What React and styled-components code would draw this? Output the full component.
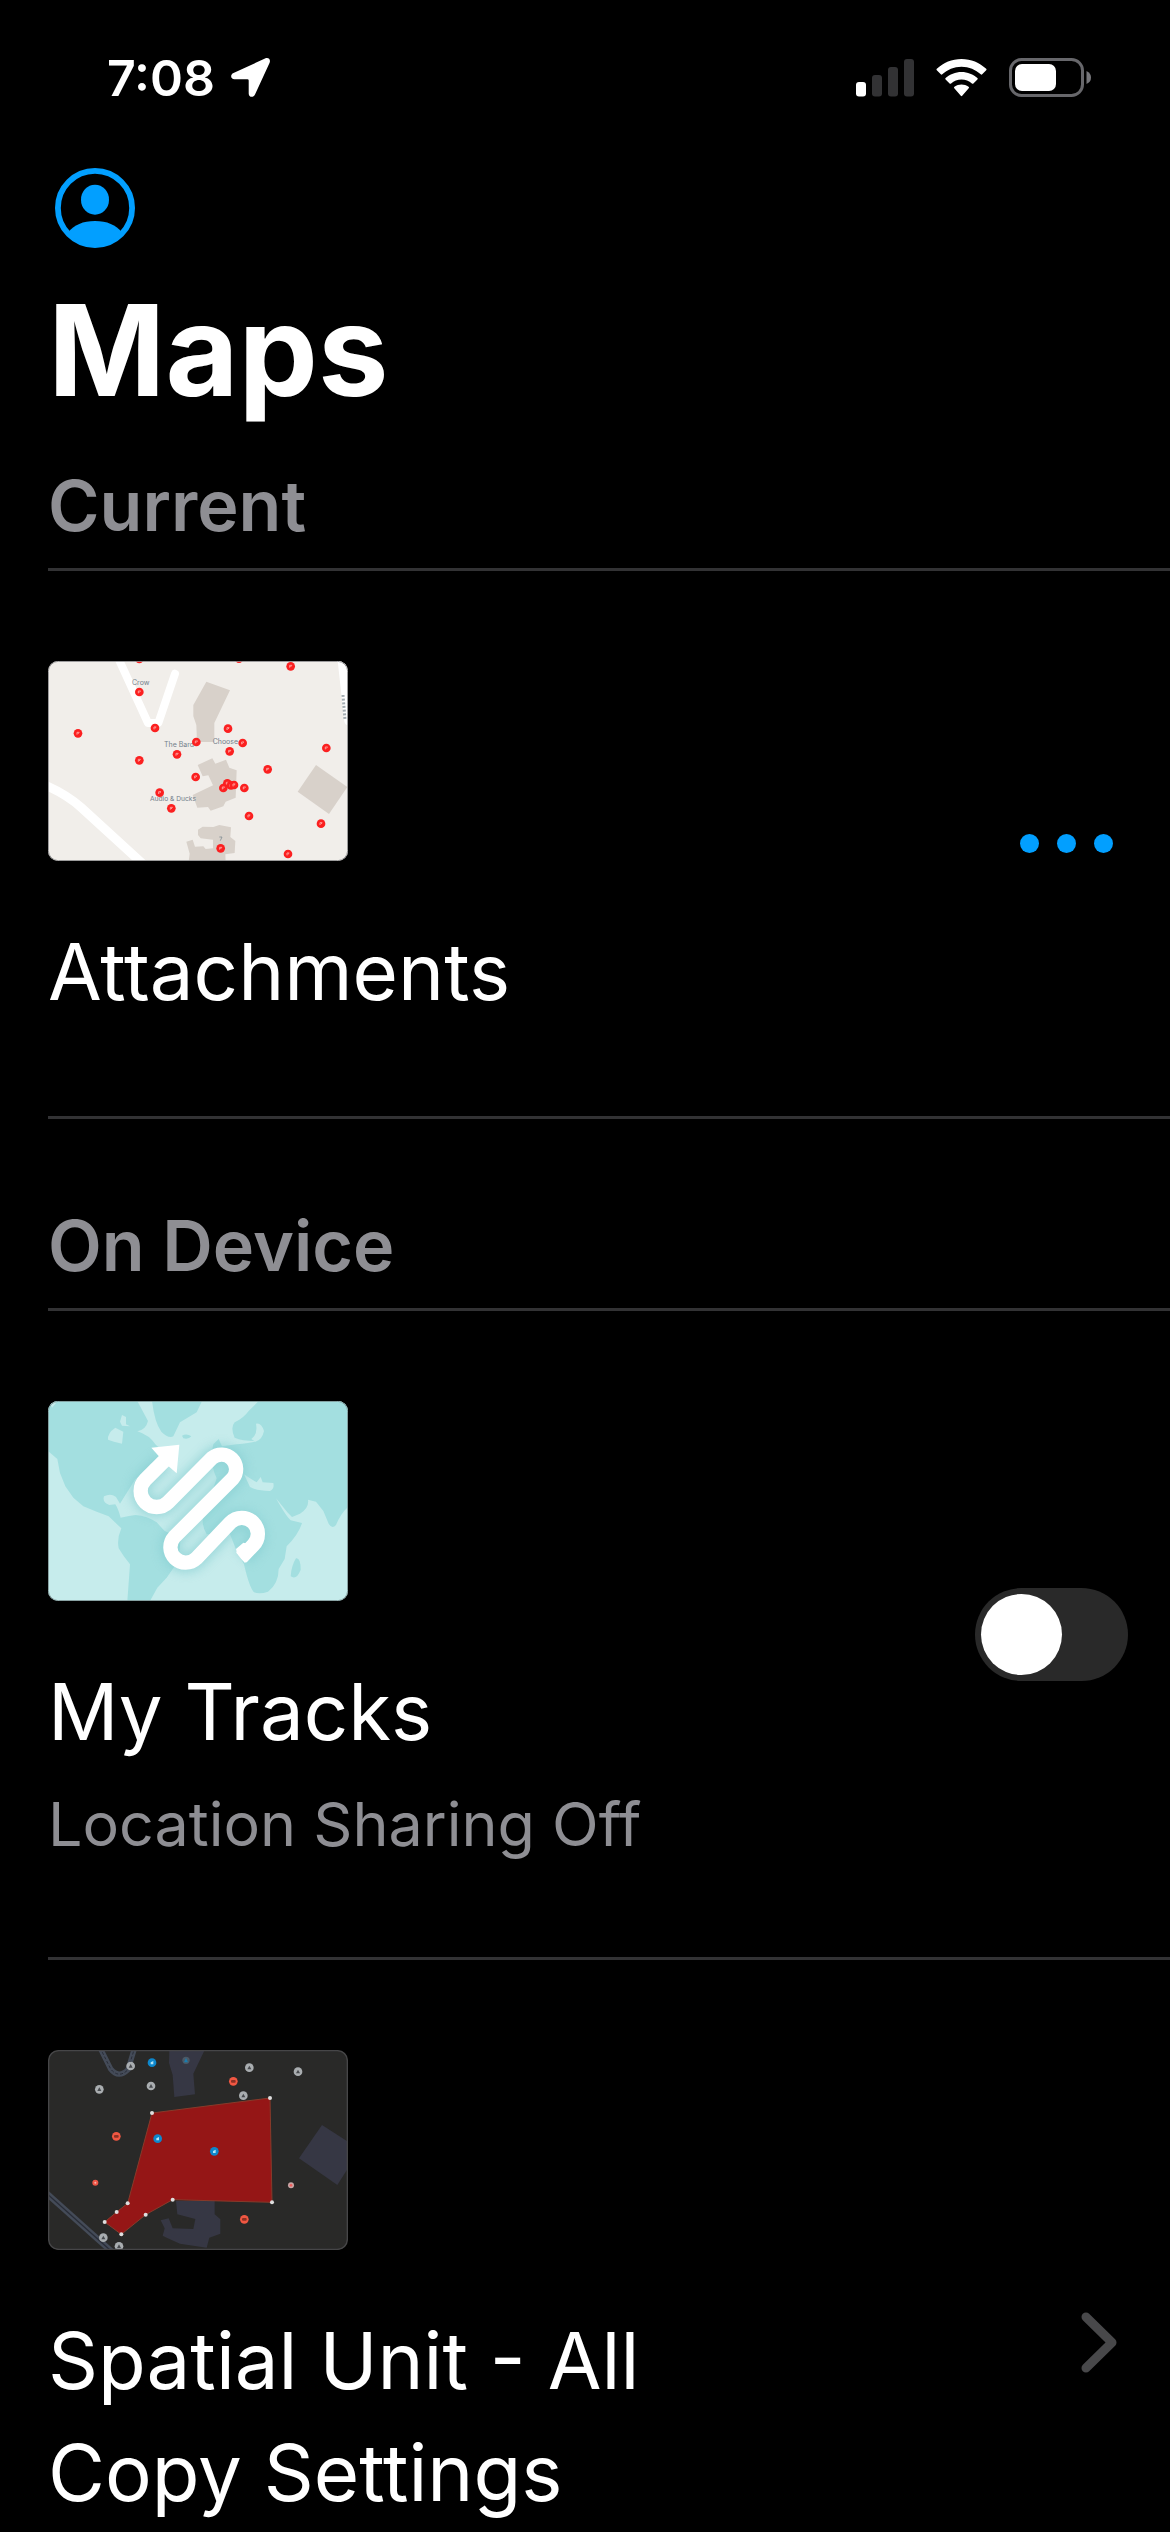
import React, { useState } from "react";
import styled, { createGlobalStyle } from "styled-components";

const BLUE = "#029fff";
const GREY = "#8e8e93";
const RULE = "#323234";

const GlobalStyle = createGlobalStyle`
  *, *::before, *::after { box-sizing: border-box; }
  body {
    margin: 0;
    background: #000;
    color: #fff;
    font-family: Inter, "Liberation Sans", sans-serif;
  }
`;

const Screen = styled.main`
  height: 100vh;
  overflow-y: auto;
  scrollbar-width: none;
`;

const StatusBar = styled.div`
  display: flex;
  align-items: center;
  justify-content: space-between;
  height: 155px;
  padding: 0 79px 0 107px;
`;

const StatusGroup = styled.div`
  display: flex;
  align-items: center;
  gap: ${(p) => p.$gap}px;
`;

const Time = styled.time`
  font-size: 50px;
  line-height: 60px;
  font-weight: 600;
`;

const Header = styled.header`
  display: flex;
  flex-direction: column;
  align-items: flex-start;
  gap: 26px;
  padding: 13px 48px 0;
`;

const ProfileButton = styled.button`
  display: block;
  margin: 0 0 0 7px;
  padding: 0;
  border: 0;
  background: none;
  color: ${BLUE};

  svg { display: block; }
`;

const PageTitle = styled.h1`
  margin: 0;
  font-size: 126px;
  line-height: 152px;
  font-weight: 700;
`;

const SectionTitle = styled.h2`
  margin: 0 0 0 48px;
  padding: ${(p) => p.$space}px 0 18px;
  border-bottom: 3px solid ${RULE};
  color: ${GREY};
  font-size: 70px;
  line-height: 88px;
  font-weight: 600;
`;

const Row = styled.article`
  display: flex;
  align-items: center;
  justify-content: space-between;
  margin-left: 48px;
  padding-right: 42px;
`;

const Divider = styled.hr`
  height: 3px;
  margin: 0 0 0 48px;
  border: 0;
  background: ${RULE};
`;

const RowBody = styled.div`
  display: flex;
  flex-direction: column;
  max-width: 700px;
  min-height: ${(p) => (p.$tall ? 764 : 0)}px;
  padding: 90px 0 88px;
`;

const Thumbnail = styled.svg`
  display: block;
  width: 300px;
  height: 200px;
  margin-bottom: 55px;
  border-radius: 10px;
`;

const RowTitle = styled.h3`
  margin: 0;
  font-size: 78px;
  line-height: 112px;
  font-weight: 400;
`;

const RowDetail = styled.p`
  margin: 11px 0 0;
  color: ${GREY};
  font-size: 61px;
  line-height: 90px;
`;

const MoreButton = styled.button`
  display: flex;
  gap: 18px;
  padding: 30px 15px;
  border: 0;
  background: none;
`;

const Dot = styled.span`
  width: 19px;
  height: 19px;
  border-radius: 50%;
  background: ${BLUE};
`;

const Switch = styled.input`
  display: flex;
  align-items: center;
  width: 153px;
  height: 93px;
  margin: 0;
  padding: 6px;
  border-radius: 47px;
  appearance: none;
  background: ${(p) => (p.checked ? "#30d158" : "#292929")};

  &::before {
    content: "";
    width: 81px;
    height: 81px;
    margin-left: ${(p) => (p.checked ? 60 : 0)}px;
    border-radius: 50%;
    background: #fff;
  }
`;

const OpenLink = styled.a`
  display: block;
  padding: 20px 11px;
  color: #48484a;

  svg { display: block; }
`;

const RED_PINS = [
  [298, 123], [345, 231], [114, 247], [469, 273], [411, 310], [298, 328],
  [564, 233], [608, 276], [569, 301], [683, 355], [467, 378], [562, 397],
  [573, 403], [582, 402], [550, 411], [613, 411], [359, 425], [394, 472],
  [627, 495], [843, 518], [744, 609], [542, 592], [859, 291], [752, 46],
  [298, 24], [597, 23],
];

function AttachmentsMap() {
  return (
    <Thumbnail viewBox="24 30 900 600" role="img" aria-label="Attachments map">
      <rect x="24" y="30" width="900" height="600" fill="#f1eeea" />
      <g fill="none" stroke="#fff" strokeLinejoin="round" strokeLinecap="round">
        <path d="M236 24 L324 216 H355 L405 68" strokeWidth="24" />
        <path d="M10 400 Q80 430 124 470 L310 640" strokeWidth="27" />
        <path d="M905 20 L926 210" strokeWidth="26" />
      </g>
      <g fill="#d8d1ca">
        <path d="M499 92 L570 118 L523 216 V273 H471 L469 222 L460 196 V162 Z" />
        <path d="M473 342 L517 322 L526 338 L558 326 L568 350 L590 358 L587 440 L557 452 L550 466 L512 479 L504 468 L472 470 L458 432 L519 403 L505 373 L488 376 Z" />
        <path d="M828 342 L922 408 L867 489 L773 422 Z" />
        <path d="M474 536 L488 527 L520 528 L538 522 L573 529 L571 558 L586 570 L584 606 L556 610 L557 632 L446 632 L449 608 L439 572 L458 566 L465 587 L490 586 L497 594 L519 592 V566 L482 562 L474 552 Z" />
      </g>
      <g fill="#71808a" fontFamily="Inter, sans-serif" fontSize="21">
        <text x="276" y="101">Crow</text>
        <text x="372" y="287">The Bard</text>
        <text x="518" y="279">Choose</text>
        <text x="330" y="449" fontSize="20">Audio &amp; Ducks</text>
      </g>
      <path d="M909 132 L915 206" stroke="#a3abb0" strokeWidth="9" strokeDasharray="6 5" />
      <path d="M538 558 H546 L541 569" stroke="#71808a" strokeWidth="2" fill="none" />
      {RED_PINS.map(([x, y]) => (
        <g key={`${x}-${y}`}>
          <circle cx={x} cy={y} r="13" fill="#fb2020" />
          <path d={`M${x - 3} ${y + 4} V${y - 3} H${x + 4} M${x - 1} ${y + 2} L${x + 3} ${y - 2}`} stroke="#ff9c98" strokeWidth="3" fill="none" />
        </g>
      ))}
      <rect x="25" y="31" width="898" height="598" rx="30" fill="none" stroke="#8b8b8d" strokeWidth="3" />
    </Thumbnail>
  );
}

function TracksMap() {
  return (
    <Thumbnail viewBox="24 30 900 600" role="img" aria-label="World map with a track">
      <defs>
        <filter id="glow" x="-30%" y="-30%" width="160%" height="160%">
          <feGaussianBlur stdDeviation="14" />
        </filter>
      </defs>
      <rect x="24" y="30" width="900" height="600" fill="#c6ecec" />
      <g fill="#a3dfe0">
        <path d="M24 30 H292 Q310 64 324 90 Q318 116 292 121 Q328 132 348 162 L380 190 L330 220 L312 250 L286 264 L270 290 L250 322 L240 338 L228 318 Q212 306 192 316 Q186 334 208 342 L226 340 Q234 352 242 380 Q262 376 286 372 Q322 374 350 394 L374 420 L420 440 Q424 470 408 520 L380 560 L352 590 L330 630 H262 L270 520 Q250 496 236 472 Q230 444 244 412 L206 376 L170 362 L130 346 L100 320 L76 286 L60 246 L52 204 L24 180 Z" />
        <path d="M336 30 H486 L470 64 L420 94 L400 136 Q386 144 364 122 Q344 96 336 30 Z" />
        <path d="M426 134 Q440 126 454 136 Q446 146 430 142 Z" />
        <path d="M656 30 H924 V348 Q902 368 888 402 Q876 416 866 398 L850 360 L828 332 L804 326 Q808 350 780 368 L756 378 L742 364 L708 322 Q738 376 752 388 L786 396 Q776 430 740 466 L734 504 L716 534 Q716 578 684 602 Q660 610 642 604 Q628 590 612 520 L590 480 L570 430 L500 430 Q476 390 500 350 L530 262 Q506 210 520 160 L536 144 L546 166 L590 160 Q630 156 650 150 Q606 150 584 140 Q570 110 584 94 Q610 82 626 60 Z" />
        <path d="M768 502 Q782 500 782 536 Q770 568 752 556 Q754 524 768 502 Z" />
      </g>
      <g fill="#c6ecec">
        <path d="M246 72 L258 78 V100 L270 106 L246 104 L240 92 Z" />
        <path d="M226 110 L250 122 L246 158 L222 152 L204 146 Q202 126 226 110 Z" />
        <path d="M648 98 Q664 94 672 120 Q666 148 646 152 L634 144 Q654 130 648 98 Z" />
        <path d="M612 250 L630 262 L650 274 L662 258 L668 274 L700 276 Q704 294 690 300 Q650 300 630 288 Z" />
        <path d="M30 34 H50 L36 50 Z" />
      </g>
      <g fill="none" stroke="#84cdd0" strokeWidth="62" opacity="0.6" filter="url(#glow)">
        <path d="M372 210 L316 266 A48 48 0 0 0 384 334 L516 201 A44 44 0 0 1 578 263 L403 438 A46 46 0 0 0 469 502 L572 396 A48 48 0 0 1 640 462 L608 498" />
      </g>
      <path d="M374 208 L316 266 A48 48 0 0 0 384 334 L516 201 A44 44 0 0 1 578 263 L403 438 A46 46 0 0 0 469 502 L571 395 A48 48 0 0 1 640 462 L604 500" fill="none" stroke="#fff" strokeWidth="43" />
      <path d="M334 170 L418 161 L410 247 L384 224 L356 195 Z M640 462 L655 475 L615 516 Q588 490 588 474 L610 455 Z" fill="#fff" />
      <rect x="25" y="31" width="898" height="598" rx="30" fill="none" stroke="#7e9596" strokeWidth="3" />
    </Thumbnail>
  );
}

const GREY_PINS = [[272, 85], [178, 155], [333, 145], [628, 90], [610, 174], [774, 102], [190, 600], [237, 626]];
const BLUE_PINS = [[336, 75], [353, 303], [523, 341]];
const ORANGE_PINS = [[580, 131], [229, 296], [613, 545]];
const VERTICES = [[336, 226], [690, 181], [696, 494], [398, 486], [317, 531], [244, 590], [194, 553], [230, 523], [263, 497]];

function SpatialMap() {
  return (
    <Thumbnail viewBox="24 37 900 600" role="img" aria-label="Spatial unit map">
      <rect x="24" y="37" width="900" height="600" fill="#292928" />
      <g fill="none" stroke="#444b58" strokeWidth="16">
        <path d="M180 30 L212 94 Q236 124 264 96 L284 30" />
        <path d="M14 462 L220 646" strokeWidth="18" />
      </g>
      <g fill="none" stroke="#292d38" strokeWidth="3">
        <path d="M180 30 L212 94 Q236 124 264 96 L284 30" strokeDasharray="9 6" />
        <path d="M14 462 L220 646" strokeWidth="4" />
      </g>
      <g fill="#363744">
        <path d="M388 37 H494 L460 108 L465 170 L403 178 L398 112 L387 76 Z" />
        <path d="M846 262 L924 312 V392 L892 442 L777 362 Z" />
        <path d="M408 490 H524 V530 L541 545 V588 L508 600 L500 630 L420 618 L380 600 L368 594 L374 572 L362 548 L386 542 L398 572 L460 574 L466 544 L412 530 Z" />
      </g>
      <path d="M336 226 L690 181 L696 494 L398 486 L317 531 L244 590 L194 553 L230 523 L263 497 Z" fill="#951616" stroke="#873b2b" strokeWidth="3" />
      {VERTICES.map(([x, y]) => <circle key={`${x}-${y}`} cx={x} cy={y} r="6" fill="#dedede" />)}
      {GREY_PINS.map(([x, y]) => (
        <g key={`${x}-${y}`}>
          <circle cx={x} cy={y} r="13" fill="#a9adb0" />
          <path d={`M${x} ${y - 6} L${x + 6} ${y + 5} H${x - 6} Z`} fill="#474a4e" />
        </g>
      ))}
      {BLUE_PINS.map(([x, y]) => (
        <g key={`${x}-${y}`}>
          <circle cx={x} cy={y} r="13" fill="#0d87cc" />
          <path d={`M${x - 4} ${y + 5} V${y - 1} L${x + 4} ${y - 5} V${y + 5} Z`} fill="#b3e4f6" />
        </g>
      ))}
      {ORANGE_PINS.map(([x, y]) => (
        <g key={`${x}-${y}`}>
          <circle cx={x} cy={y} r="13" fill="#f05742" />
          <rect x={x - 7} y={y - 4} width="14" height="8" rx="3" fill="#8d3024" />
        </g>
      ))}
      <circle cx="438" cy="68" r="11" fill="#4b5966" />
      <path d="M438 61 L444 74 H432 Z" fill="#1b7cae" />
      <circle cx="166" cy="435" r="9" fill="#ed5546" />
      <circle cx="166" cy="435" r="3" fill="#f9b7ad" />
      <circle cx="753" cy="443" r="9" fill="#c9a5a5" />
      <circle cx="753" cy="443" r="4" fill="#ee5b5b" />
      <rect x="26" y="39" width="896" height="596" rx="30" fill="none" stroke="#464648" strokeWidth="4" />
    </Thumbnail>
  );
}

export default function App() {
  const [sharing, setSharing] = useState(false);

  return (
    <Screen>
      <GlobalStyle />
      <StatusBar>
        <StatusGroup $gap={16}>
          <Time>7:08</Time>
          <svg width="39" height="39" viewBox="0 0 39 39" fill="#fff" aria-hidden="true">
            <path d="M34 .5 C37.500 -1 40 1.500 38.500 5 L24 36.500 C22.500 40 17.700 39.500 17.700 35.500 V22.500 Q17.700 21.300 16.500 21.300 H3.500 C-.5 21.300 -1 16.500 2.500 15 Z" />
          </svg>
        </StatusGroup>
        <StatusGroup $gap={22}>
          <svg width="58" height="38" viewBox="0 0 58 38" aria-label="Signal strength">
            <rect x="0" y="23" width="10" height="14.500" rx="3" fill="#fff" />
            <rect x="16" y="16" width="10" height="21.500" rx="3" fill="#323234" />
            <rect x="32" y="8" width="10" height="29.500" rx="3" fill="#323234" />
            <rect x="48" y="0" width="10" height="37.500" rx="3" fill="#323234" />
          </svg>
          <svg width="51" height="38" viewBox="0 0 51 38" fill="#fff" aria-label="Wi-Fi">
            <path d="M25.500 7.700 C33 7.700 39.700 10.600 44.700 15.300 Q45.500 16 46.200 15.300 L50.200 11.300 Q51 10.500 50.200 9.800 C43.700 3.700 35 0 25.500 0 S7.300 3.700 .8 9.800 Q0 10.500 .8 11.300 L4.800 15.300 Q5.500 16 6.300 15.300 C11.300 10.600 18 7.700 25.500 7.700 Z" />
            <path d="M25.500 20.500 C29.500 20.500 33.100 22 35.900 24.500 Q36.700 25.200 37.400 24.500 L41.400 20.500 Q42.200 19.700 41.400 19 C37.200 15.200 31.600 12.900 25.500 12.900 S13.800 15.200 9.600 19 Q8.800 19.700 9.600 20.500 L13.600 24.500 Q14.300 25.200 15.100 24.500 C17.900 22 21.500 20.500 25.500 20.500 Z" />
            <path d="M32.700 29.300 Q33.500 28.500 32.600 27.800 C28.300 24.800 22.700 24.800 18.400 27.800 Q17.500 28.500 18.300 29.300 L24.800 36.800 Q25.500 37.500 26.200 36.800 Z" />
          </svg>
          <svg width="82" height="39" viewBox="0 0 82 39" aria-label="Battery">
            <rect x="1.500" y="1.500" width="72" height="36" rx="11" fill="none" stroke="#67676b" strokeWidth="3" />
            <rect x="6" y="6" width="41" height="27" rx="7" fill="#fff" />
            <path d="M77.500 13 Q82 15 82 19.500 T77.500 26 Z" fill="#77777b" />
          </svg>
        </StatusGroup>
      </StatusBar>

      <Header>
        <ProfileButton type="button" aria-label="Profile">
          <svg width="80" height="80" viewBox="0 0 80 80" aria-hidden="true">
            <circle cx="40" cy="40" r="37.100" fill="none" stroke="currentColor" strokeWidth="5.800" />
            <ellipse cx="40" cy="31.700" rx="14" ry="15" fill="currentColor" />
            <path d="M13 64.500 Q22 53 40 53 T67 64.500 A37 37 0 0 1 13 64.500 Z" fill="currentColor" />
          </svg>
        </ProfileButton>
        <PageTitle>Maps</PageTitle>
      </Header>

      <section>
        <SectionTitle $space={36}>Current</SectionTitle>
        <Row>
          <RowBody>
            <AttachmentsMap />
            <RowTitle>Attachments</RowTitle>
          </RowBody>
          <MoreButton type="button" aria-label="More options">
            <Dot />
            <Dot />
            <Dot />
          </MoreButton>
        </Row>
        <Divider />
      </section>

      <section>
        <SectionTitle $space={83}>On Device</SectionTitle>
        <Row>
          <RowBody>
            <TracksMap />
            <RowTitle as="label" htmlFor="sharing">My Tracks</RowTitle>
            <RowDetail>Location Sharing Off</RowDetail>
          </RowBody>
          <Switch
            id="sharing"
            type="checkbox"
            role="switch"
            checked={sharing}
            onChange={(e) => setSharing(e.target.checked)}
          />
        </Row>
        <Divider />
        <Row>
          <RowBody $tall>
            <SpatialMap />
            <RowTitle>Spatial Unit - All Copy Settings</RowTitle>
          </RowBody>
          <OpenLink href="#spatial-unit" aria-label="Open Spatial Unit - All Copy Settings">
            <svg width="36" height="61" viewBox="0 0 36 61" fill="none" stroke="currentColor" strokeWidth="9" strokeLinecap="round" strokeLinejoin="round" aria-hidden="true">
              <path d="M5 5 L31 30.500 L5 56" />
            </svg>
          </OpenLink>
        </Row>
      </section>
    </Screen>
  );
}
